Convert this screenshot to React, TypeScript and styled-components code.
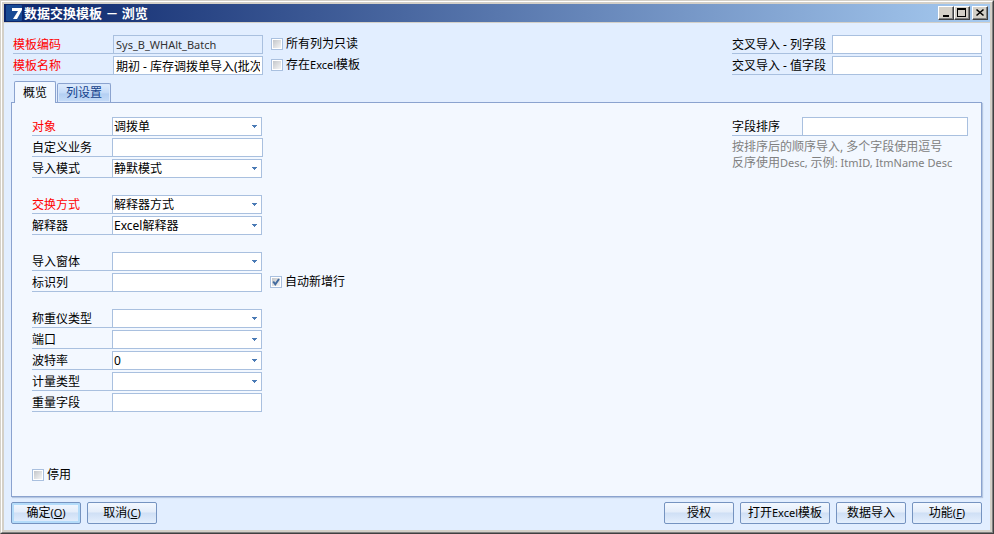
import React, { ReactNode, useId, useState } from "react";
import styled, { createGlobalStyle, css } from "styled-components";

const line = "#a9c0df";
const face = "#d4d0c8";

const GlobalStyle = createGlobalStyle`
  *, *::before, *::after { box-sizing: border-box; }
  body { margin: 0; }
  body, button, input, select {
    font-family: "Noto Sans", "Noto Sans CJK SC", sans-serif;
    font-size: 12px;
    line-height: 16px;
    color: #000;
  }
`;

const Window = styled.div`
  display: flex;
  flex-direction: column;
  min-height: 100vh;
  border: 1px solid;
  border-color: ${face} #404040 #404040 ${face};
`;

const Frame = styled.div`
  flex: 1;
  display: flex;
  flex-direction: column;
  border: 1px solid;
  border-color: #fff #808080 #808080 #fff;
`;

const Body = styled.div`
  flex: 1;
  display: flex;
  flex-direction: column;
  border: 2px solid ${face};
  background: #e2eeff;
`;

const TitleBar = styled.header`
  display: flex;
  align-items: center;
  height: 19px;
  padding: 0 2px;
  background: linear-gradient(90deg, #0a246a, #a6caf0);
  border-bottom: 1px solid ${face};
`;

const Logo = styled.svg`
  width: 16px;
  height: 16px;
  flex: none;
`;

const Title = styled.h1`
  flex: 1;
  margin: 0 0 0 2px;
  font-size: 13px;
  line-height: 16px;
  font-weight: 700;
  color: #fff;
  white-space: pre;
`;

const WindowButton = styled.button<{ $apart?: boolean }>`
  display: grid;
  place-items: center;
  width: 16px;
  height: 14px;
  padding: 0;
  margin-left: ${(p) => (p.$apart ? "2px" : 0)};
  background: ${face};
  border: 1px solid;
  border-color: #fff #404040 #404040 #fff;
  box-shadow: inset -1px -1px #808080;
`;

const Content = styled.main`
  flex: 1;
  display: flex;
  flex-direction: column;
  padding: 12px 8px 6px 7px;
`;

const Columns = styled.div<{ $inset?: boolean }>`
  display: flex;
  justify-content: space-between;
  align-items: flex-start;
  padding: ${(p) => (p.$inset ? "0" : "0 0 0 2px")};
`;

const Stack = styled.div`
  display: flex;
  flex-direction: column;
  gap: 2px;
`;

const Groups = styled(Stack)`
  gap: 17px;
`;

const FieldLine = styled.div`
  display: flex;
  align-items: flex-start;
  gap: 8px;
`;

const Field = styled.div`
  display: flex;
  height: 19px;
`;

const Latin = styled.span`
  font-size: 11px;
`;

const Label = styled.label<{ $width: number; $required?: boolean }>`
  width: ${(p) => p.$width}px;
  padding-top: 2px;
  border-bottom: 1px solid ${line};
  color: ${(p) => (p.$required ? "#f00" : "#000")};
  white-space: nowrap;
`;

const control = css`
  height: 19px;
  margin: 0;
  padding: 0 2px;
  border: 1px solid ${line};
  border-radius: 0;
  background: #fff;
  outline: none;
  &:focus-visible { border-color: #4a7ab5; }
`;

const TextBox = styled.input<{ $width: number }>`
  ${control}
  width: ${(p) => p.$width}px;
  &:read-only { background: #e2eeff; color: #333; font-size: 11px; }
`;

const SelectBox = styled.div`
  display: grid;
  align-items: center;
  width: 150px;
  > * { grid-area: 1 / 1; }
  svg { justify-self: end; margin-right: 5px; pointer-events: none; }
`;

const Select = styled.select`
  ${control}
  padding: 0 1px;
  width: 100%;
  appearance: none;
`;

const CheckLabel = styled.label`
  display: flex;
  align-items: center;
  gap: 3px;
  height: 18px;
  white-space: nowrap;
`;

const CheckBox = styled.input`
  appearance: none;
  width: 12px;
  height: 12px;
  margin: 0;
  border: 1px solid ${line};
  background: linear-gradient(135deg, #c3c6ca, #f6f6f6) content-box, #fff;
  padding: 1px;
  &:checked {
    background: url("data:image/svg+xml,%3Csvg xmlns='http://www.w3.org/2000/svg' viewBox='0 0 10 10'%3E%3Cpath d='M2.2 4.5 4.3 7.3 8 2' fill='none' stroke='%23426b9f' stroke-width='2'/%3E%3C/svg%3E") center / 10px 10px no-repeat,
      linear-gradient(135deg, #c3c6ca, #f6f6f6) content-box, #fff;
  }
`;

const Tabs = styled.div`
  display: flex;
  align-items: flex-end;
  gap: 1px;
  margin-top: 6px;
  padding-left: 3px;
`;

const Tab = styled.button<{ $active: boolean }>`
  padding: 0 8px;
  border: 1px solid #8ba3cf;
  border-bottom: 0;
  border-radius: 2px 2px 0 0;
  ${(p) =>
    p.$active
      ? css`
          height: 22px;
          margin-bottom: -1px;
          background: #f3f8ff;
          z-index: 1;
        `
      : css`
          height: 19px;
          background: linear-gradient(#dfecfd, #c3daf8 50%, #b3cff3 55%, #c6dcf8);
          box-shadow: inset 0 0 0 1px #d9e8fc;
          color: #15428b;
        `}
`;

const Panel = styled.section`
  flex: 1;
  display: flex;
  flex-direction: column;
  padding: 14px 13px 12px 20px;
  border: 1px solid #8ba3cf;
  background: #f3f8ff;
  box-shadow: 1px 1px 1px #b5c7e2;
`;

const Hint = styled.p`
  margin: 1px 0 0;
  color: #808080;
`;

const PanelFooter = styled.div`
  margin-top: auto;
`;

const Footer = styled.footer`
  display: flex;
  gap: 6px;
  padding-top: 5px;
`;

const Spacer = styled.div`
  flex: 1;
`;

const Button = styled.button<{ $primary?: boolean }>`
  height: 22px;
  min-width: 70px;
  padding: 0 7px;
  border: 1px solid #7593c0;
  border-radius: 2px;
  background: linear-gradient(#f3f8ff 0, #e4edfa 45%, #cfdff5 50%, #e4effd 100%);
  box-shadow: ${(p) => (p.$primary ? "inset 0 0 0 2px #b4dcfa" : "none")};
  white-space: nowrap;
`;

type FieldProps = {
  label: string;
  value?: string;
  required?: boolean;
  labelWidth?: number;
  width?: number;
  readOnly?: boolean;
};

function TextField({ label, value = "", required, labelWidth = 80, width = 150, readOnly }: FieldProps) {
  const id = useId();
  return (
    <Field>
      <Label htmlFor={id} $width={labelWidth} $required={required}>{label}</Label>
      <TextBox id={id} $width={width} defaultValue={value} readOnly={readOnly} />
    </Field>
  );
}

function SelectField({ label, value = "", required }: FieldProps) {
  const id = useId();
  return (
    <Field>
      <Label htmlFor={id} $width={80} $required={required}>{label}</Label>
      <SelectBox>
        <Select id={id} defaultValue={value}>
          <option>{value}</option>
        </Select>
        <svg width="5" height="3" shapeRendering="crispEdges" aria-hidden="true">
          <path d="M0 0h5v1h-1v1h-1v1h-1v-1h-1v-1h-1z" fill="#4a7ab5" />
        </svg>
      </SelectBox>
    </Field>
  );
}

function Check({ children, checked = false }: { children: ReactNode; checked?: boolean }) {
  return (
    <CheckLabel>
      <CheckBox type="checkbox" defaultChecked={checked} />
      <span>{children}</span>
    </CheckLabel>
  );
}

function Shortcut({ letter }: { letter: string }) {
  return (
    <Latin>
      (<u>{letter}</u>)
    </Latin>
  );
}

export default function App() {
  const [tab, setTab] = useState(0);
  return (
    <Window>
      <GlobalStyle />
      <Frame>
        <Body>
          <TitleBar>
            <Logo viewBox="0 0 16 16" aria-hidden="true">
              <rect width="16" height="16" rx="1" fill="#184a94" />
              <path d="M6 3h10v2l-5 9H7l5-8H6z" fill="#fff" />
            </Logo>
            <Title>数据交换模板 － 浏览</Title>
            <WindowButton aria-label="最小化">
              <svg width="12" height="10" shapeRendering="crispEdges"><path d="M3 7h6v2H3z" /></svg>
            </WindowButton>
            <WindowButton aria-label="最大化">
              <svg width="12" height="10" shapeRendering="crispEdges"><path d="M1 0h9v9H1zM2 2v6h7V2z" fillRule="evenodd" /></svg>
            </WindowButton>
            <WindowButton aria-label="关闭" $apart>
              <svg width="12" height="10"><path d="M2.5 1.5l7 6M9.5 1.5l-7 6" stroke="#000" strokeWidth="1.6" /></svg>
            </WindowButton>
          </TitleBar>
          <Content>
            <Columns>
              <Stack>
                <FieldLine>
                  <TextField label="模板编码" value="Sys_B_WHAlt_Batch" required labelWidth={100} readOnly />
                  <Check>所有列为只读</Check>
                </FieldLine>
                <FieldLine>
                  <TextField label="模板名称" value="期初 - 库存调拨单导入(批次" required labelWidth={100} />
                  <Check>存在<Latin>Excel</Latin>模板</Check>
                </FieldLine>
              </Stack>
              <Stack>
                <TextField label="交叉导入 - 列字段" labelWidth={100} />
                <TextField label="交叉导入 - 值字段" labelWidth={100} />
              </Stack>
            </Columns>
            <Tabs role="tablist">
              {["概览", "列设置"].map((name, i) => (
                <Tab key={name} role="tab" aria-selected={tab === i} $active={tab === i} onClick={() => setTab(i)}>
                  {name}
                </Tab>
              ))}
            </Tabs>
            <Panel role="tabpanel">
              <Columns $inset>
                <Groups>
                  <Stack>
                    <SelectField label="对象" value="调拨单" required />
                    <TextField label="自定义业务" width={151} />
                    <SelectField label="导入模式" value="静默模式" />
                  </Stack>
                  <Stack>
                    <SelectField label="交换方式" value="解释器方式" required />
                    <SelectField label="解释器" value="Excel解释器" />
                  </Stack>
                  <Stack>
                    <SelectField label="导入窗体" />
                    <FieldLine>
                      <TextField label="标识列" />
                      <Check checked>自动新增行</Check>
                    </FieldLine>
                  </Stack>
                  <Stack>
                    <SelectField label="称重仪类型" />
                    <SelectField label="端口" />
                    <SelectField label="波特率" value="0" />
                    <SelectField label="计量类型" />
                    <TextField label="重量字段" />
                  </Stack>
                </Groups>
                <Stack>
                  <TextField label="字段排序" labelWidth={70} width={166} />
                  <Hint>
                    按排序后的顺序导入, 多个字段使用逗号
                    <br />
                    反序使用<Latin>Desc, </Latin>示例<Latin>: ItmID, ItmName Desc</Latin>
                  </Hint>
                </Stack>
              </Columns>
              <PanelFooter>
                <Check>停用</Check>
              </PanelFooter>
            </Panel>
            <Footer>
              <Button $primary>确定<Shortcut letter="O" /></Button>
              <Button>取消<Shortcut letter="C" /></Button>
              <Spacer />
              <Button>授权</Button>
              <Button>打开<Latin>Excel</Latin>模板</Button>
              <Button>数据导入</Button>
              <Button>功能<Shortcut letter="F" /></Button>
            </Footer>
          </Content>
        </Body>
      </Frame>
    </Window>
  );
}
